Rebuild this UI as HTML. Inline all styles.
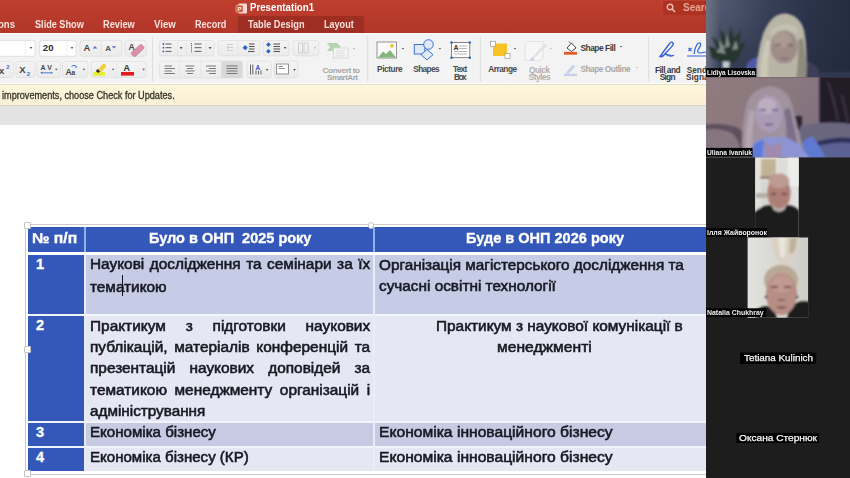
<!DOCTYPE html><html><head><meta charset="utf-8"><style>
html,body{margin:0;padding:0;}
body{width:850px;height:478px;overflow:hidden;position:relative;background:#fff;font-family:"Liberation Sans",sans-serif;}
.t{position:absolute;white-space:pre;}
.b{position:absolute;box-sizing:border-box;}
svg{position:absolute;}
</style></head><body>
<div class="b" style="left:0.00px;top:0.00px;width:706.00px;height:32.80px;background:linear-gradient(#bf3f2e,#b7392b 60%,#b3362a);"></div>
<div class="b" style="left:238.00px;top:16.00px;width:125.50px;height:16.80px;background:#9e2e22;border-radius:2px 2px 0 0;"></div>
<div class="t" style="left:-2.00px;top:19.54px;font-size:10px;line-height:10px;color:#f8e2dc;font-weight:bold;transform-origin:0 0;transform:scaleX(0.9551);">ons</div>
<div class="t" style="left:34.80px;top:19.54px;font-size:10px;line-height:10px;color:#f8e2dc;font-weight:bold;transform-origin:0 0;transform:scaleX(0.9137);">Slide Show</div>
<div class="t" style="left:102.80px;top:19.54px;font-size:10px;line-height:10px;color:#f8e2dc;font-weight:bold;transform-origin:0 0;transform:scaleX(0.9217);">Review</div>
<div class="t" style="left:153.60px;top:19.54px;font-size:10px;line-height:10px;color:#f8e2dc;font-weight:bold;transform-origin:0 0;transform:scaleX(0.9602);">View</div>
<div class="t" style="left:194.50px;top:19.54px;font-size:10px;line-height:10px;color:#f8e2dc;font-weight:bold;transform-origin:0 0;transform:scaleX(0.9072);">Record</div>
<div class="t" style="left:248.30px;top:19.54px;font-size:10px;line-height:10px;color:#f8e2dc;font-weight:bold;transform-origin:0 0;transform:scaleX(0.9187);">Table Design</div>
<div class="t" style="left:324.00px;top:19.54px;font-size:10px;line-height:10px;color:#f8e2dc;font-weight:bold;transform-origin:0 0;transform:scaleX(0.9055);">Layout</div>
<div class="t" style="left:249.60px;top:3.34px;font-size:10px;line-height:10px;color:#ffffff;font-weight:bold;transform-origin:0 0;transform:scaleX(0.9682);">Presentation1</div>
<svg style="left:235px;top:2px" width="13" height="13" viewBox="0 0 13 13"><rect x="3.5" y="1.5" width="8.5" height="10" rx="1" fill="#f6d9d2"/><rect x="1" y="3.2" width="7" height="7" rx="0.8" fill="#d24c33" stroke="#f3c9bf" stroke-width="0.6"/><text x="2.6" y="8.9" font-family="Liberation Sans" font-size="6" font-weight="bold" fill="#fff">P</text></svg>
<div class="b" style="left:663.00px;top:1.00px;width:43.00px;height:13.50px;background:#ac3322;border-radius:3px 0 0 3px;"></div>
<svg style="left:666px;top:3px" width="10" height="10" viewBox="0 0 10 10"><circle cx="4" cy="4" r="2.8" fill="none" stroke="#eebbb2" stroke-width="1.4"/><line x1="6" y1="6" x2="9" y2="9" stroke="#eebbb2" stroke-width="1.6"/></svg>
<div class="t" style="left:683.00px;top:2.94px;font-size:10px;line-height:10px;color:#e4a292;font-weight:bold;">Search</div>
<div class="b" style="left:0.00px;top:32.80px;width:706.00px;height:50.70px;background:linear-gradient(#fbfbfb 0px,#f3f3f3 2px,#f3f3f3);"></div>
<svg style="left:0px;top:33.5px" width="706" height="50" viewBox="0 33.5 706 50" font-family="Liberation Sans, sans-serif">
<defs>
<linearGradient id="gb" x1="0" y1="0" x2="0" y2="1"><stop offset="0" stop-color="#f4f4f4"/><stop offset="1" stop-color="#ebebeb"/></linearGradient>
</defs>
<g fill="url(#gb)" stroke="#dcdcdc" stroke-width="0.7">
<rect x="80" y="39.9" width="41.9" height="15.9" rx="2.5"/>
<rect x="125" y="39.9" width="21.2" height="15.9" rx="2.5"/>
<rect x="-3" y="61" width="16.5" height="16" rx="2.5"/>
<rect x="15.9" y="61" width="19.1" height="16" rx="2.5"/>
<rect x="37" y="61" width="23.4" height="16" rx="2.5"/>
<rect x="62.5" y="61" width="25.4" height="16" rx="2.5"/>
<rect x="91.2" y="61" width="55" height="16" rx="2.5"/>
<rect x="159.4" y="40" width="54.6" height="15.4" rx="2.5"/>
<rect x="218" y="40" width="42" height="15.4" rx="2.5"/>
<rect x="263" y="40" width="26" height="15.4" rx="2.5"/>
<rect x="292.8" y="40" width="26" height="15.4" rx="2.5"/>
<rect x="159.4" y="60.6" width="83" height="17" rx="2.5"/>
<rect x="247" y="60.6" width="24.4" height="16.8" rx="2.5"/>
<rect x="274.4" y="60.6" width="23.6" height="16.8" rx="2.5"/>
</g>
<!-- dividers inside groups -->
<g stroke="#e2e2e2" stroke-width="0.7">
<line x1="101" y1="40.5" x2="101" y2="55.3"/>
<line x1="116.6" y1="61.5" x2="116.6" y2="76.5"/>
<line x1="177.8" y1="40.5" x2="177.8" y2="55"/>
<line x1="186.3" y1="40.5" x2="186.3" y2="55"/>
<line x1="206" y1="40.5" x2="206" y2="55"/>
<line x1="238" y1="40.5" x2="238" y2="55"/>
<line x1="179.4" y1="61" x2="179.4" y2="77"/>
<line x1="200.6" y1="61" x2="200.6" y2="77"/>
</g>
<rect x="221.2" y="60.8" width="21.2" height="16.6" fill="#d9d9d9"/>
<!-- separators -->
<g stroke="#d8d8d8" stroke-width="0.8">
<line x1="152.5" y1="36" x2="152.5" y2="81"/>
<line x1="367.7" y1="36" x2="367.7" y2="81"/>
<line x1="480.4" y1="36" x2="480.4" y2="81"/>
<line x1="648.6" y1="36" x2="648.6" y2="81"/>
</g>
<!-- font name & size boxes -->
<rect x="-3" y="39.9" width="38" height="15.9" rx="2" fill="#ffffff" stroke="#d6d6d6" stroke-width="0.7"/>
<line x1="25.4" y1="40.5" x2="25.4" y2="55.3" stroke="#ececec" stroke-width="0.7"/>
<rect x="39.7" y="39.9" width="36.5" height="15.9" rx="2" fill="#ffffff" stroke="#d6d6d6" stroke-width="0.7"/>
<line x1="66.7" y1="40.5" x2="66.7" y2="55.3" stroke="#ececec" stroke-width="0.7"/>
<text x="42.8" y="50.3" font-size="9.6" font-weight="bold" fill="#2a2a2a">20</text>
<g fill="#555">
<path d="M29.6,46.6 h2.8 l-1.4,2 z"/>
<path d="M70.6,46.6 h2.8 l-1.4,2 z"/>
<path d="M179.6,46.6 h3 l-1.5,2.1 z"/>
<path d="M208.6,46.6 h3 l-1.5,2.1 z"/>
<path d="M283.6,46.4 h3 l-1.5,2.1 z"/>
<path d="M55,68.2 h2.6 l-1.3,1.9 z"/>
<path d="M82.6,68.2 h2.6 l-1.3,1.9 z"/>
<path d="M111.8,68.2 h2.6 l-1.3,1.9 z"/>
<path d="M142.4,68.2 h2.6 l-1.3,1.9 z"/>
<path d="M265.8,68.6 h2.6 l-1.3,1.9 z"/>
<path d="M293.2,68.6 h2.6 l-1.3,1.9 z"/>
<path d="M401.7,47.4 h2.4 l-1.2,1.7 z"/>
<path d="M438.7,47.4 h2.4 l-1.2,1.7 z"/>
<path d="M513.7,47.4 h2.4 l-1.2,1.7 z"/>
<path d="M619.7,45.4 h2.4 l-1.2,1.7 z"/>
</g>
<g fill="#bdbdbd">
<path d="M313.6,46.4 h2.6 l-1.3,1.9 z"/>
<path d="M352.6,47.4 h2.6 l-1.3,1.9 z"/>
<path d="M549.6,47.4 h2.4 l-1.2,1.7 z"/>
<path d="M635.6,66.4 h2.4 l-1.2,1.7 z"/>
</g>
<!-- grow / shrink font -->
<text x="83.6" y="50.8" font-size="9.4" font-weight="bold" fill="#474747">A</text>
<path d="M92.6,48 l2.4,-2.4 l2.4,2.4 z" fill="#5a6ec8"/>
<text x="105.2" y="50.6" font-size="8" font-weight="bold" fill="#555">A</text>
<path d="M111.8,45.8 h4.4 l-2.2,2.3 z" fill="#5a6ec8"/>
<!-- clear formatting -->
<text x="128.4" y="49.6" font-size="8.6" font-weight="bold" fill="#474747">A</text>
<path d="M131.6,51.8 l8.2,-7.2 q1.2,-1 2.2,0 l1.6,1.6 q1,1.1 0,2.1 l-8,7.4 q-1,0.9 -2,0 l-2,-1.9 q-0.9,-1 0,-2 z" fill="#dc8eac" stroke="#b4607e" stroke-width="0.5"/>
<!-- x^2 x_2 -->
<text x="-1" y="73.6" font-size="9.5" font-weight="bold" fill="#444">x</text>
<text x="6.3" y="68.4" font-size="6" font-weight="bold" fill="#3b6fd1">2</text>
<text x="19.2" y="72.6" font-size="9.5" font-weight="bold" fill="#444">X</text>
<text x="26.7" y="75.2" font-size="6" font-weight="bold" fill="#3b6fd1">2</text>
<!-- char spacing -->
<text x="40.6" y="69" font-size="7" font-weight="bold" fill="#474747" textLength="11.4">AV</text>
<path d="M41.5,72.3 h10" stroke="#3b6fd1" stroke-width="0.9"/>
<path d="M40.4,72.3 l1.8,-1.3 v2.6 z M53,72.3 l-1.8,-1.3 v2.6 z" fill="#3b6fd1"/>
<!-- change case -->
<text x="65.6" y="74.2" font-size="8.6" font-weight="bold" fill="#474747">A</text>
<text x="71.4" y="74.2" font-size="6.6" font-weight="bold" fill="#474747">a</text>
<path d="M71.5,65.8 q2.6,-2.2 5,0.2" stroke="#3b6fd1" stroke-width="1" fill="none"/>
<path d="M76.8,67.4 l-2,-0.6 l1.6,-1.4 z" fill="#3b6fd1"/>
<!-- highlighter -->
<rect x="93" y="71.5" width="12" height="3.8" rx="0.8" fill="#e6f02a"/>
<path d="M97.5,69.6 l5.5,-6 q1,-0.8 1.8,0 l1.2,1.2 q0.7,0.8 0,1.6 l-5.6,5.8 z" fill="#f2cf3c"/>
<path d="M95.8,70.6 l1.8,-2.1 l2.6,2.4 l-2.2,1.6 z" fill="#2e2e2e"/>
<!-- font color -->
<text x="123.6" y="70.2" font-size="9" font-weight="bold" fill="#333">A</text>
<rect x="121" y="71.5" width="13" height="3.6" fill="#e01b1b"/>
<!-- bullets -->
<g fill="#3a5bb0"><circle cx="163.4" cy="43.5" r="0.9"/><circle cx="163.4" cy="47.2" r="0.9"/><circle cx="163.4" cy="50.9" r="0.9"/></g>
<g stroke="#4d4d4d" stroke-width="0.9"><line x1="165.5" y1="43.5" x2="171.5" y2="43.5"/><line x1="165.5" y1="47.2" x2="171.5" y2="47.2"/><line x1="165.5" y1="50.9" x2="171.5" y2="50.9"/>
<line x1="194.5" y1="43.5" x2="201.5" y2="43.5"/><line x1="194.5" y1="47.2" x2="201.5" y2="47.2"/><line x1="194.5" y1="50.9" x2="201.5" y2="50.9"/></g>
<line x1="191.5" y1="42.5" x2="191.5" y2="52" stroke="#5a6fb8" stroke-width="1" stroke-dasharray="1.2,0.6"/>
<!-- indents -->
<g stroke="#c9c9c9" stroke-width="0.9"><line x1="227" y1="44" x2="233" y2="44"/><line x1="229" y1="47" x2="233" y2="47"/><line x1="227" y1="50" x2="233" y2="50"/></g>
<path d="M226.5,47 l2,-2 v4 z" fill="#b8c3e6"/>
<g stroke="#5a5a5a" stroke-width="1.1"><line x1="249" y1="43.5" x2="254.5" y2="43.5"/><line x1="249" y1="46" x2="254.5" y2="46"/><line x1="249" y1="48.5" x2="254.5" y2="48.5"/><line x1="248" y1="51" x2="254.5" y2="51"/></g>
<path d="M245.2,44.6 l2.6,2.6 l-2.6,2.6 l-2.6,-2.6 z" fill="#2a5fcc"/>
<!-- line spacing -->
<path d="M268.4,41.8 l2.3,2.3 l-2.3,2.3 l-2.3,-2.3 z M268.4,48.4 l2.3,2.3 l-2.3,2.3 l-2.3,-2.3 z" fill="#2a5fcc"/>
<g stroke="#5a5a5a" stroke-width="1.1"><line x1="273.5" y1="43.5" x2="280" y2="43.5"/><line x1="273.5" y1="46" x2="280" y2="46"/><line x1="273.5" y1="48.5" x2="280" y2="48.5"/><line x1="273.5" y1="51" x2="280" y2="51"/></g>
<!-- columns disabled -->
<g stroke="#cfcfcf" stroke-width="1"><rect x="298.5" y="42.5" width="4" height="10" fill="none"/><rect x="304" y="42.5" width="4" height="10" fill="none"/></g>
<!-- align icons -->
<g stroke="#6b6b6b" stroke-width="0.9">
<line x1="164.5" y1="65.5" x2="172" y2="65.5"/><line x1="164.5" y1="68" x2="175" y2="68"/><line x1="164.5" y1="70.5" x2="172" y2="70.5"/><line x1="164.5" y1="73" x2="175" y2="73"/>
<line x1="185.5" y1="65.5" x2="194.5" y2="65.5"/><line x1="187" y1="68" x2="193" y2="68"/><line x1="185.5" y1="70.5" x2="194.5" y2="70.5"/><line x1="187" y1="73" x2="193" y2="73"/>
<line x1="206" y1="65.5" x2="216" y2="65.5"/><line x1="209" y1="68" x2="216" y2="68"/><line x1="206" y1="70.5" x2="216" y2="70.5"/><line x1="209" y1="73" x2="216" y2="73"/>
<line x1="226.5" y1="65.5" x2="237.5" y2="65.5"/><line x1="226.5" y1="68" x2="237.5" y2="68"/><line x1="226.5" y1="70.5" x2="237.5" y2="70.5"/><line x1="226.5" y1="73" x2="237.5" y2="73"/>
</g>
<!-- text direction -->
<g stroke="#555" stroke-width="0.9"><line x1="250.5" y1="64" x2="250.5" y2="74"/><line x1="252.8" y1="64" x2="252.8" y2="74"/><line x1="256" y1="70" x2="256" y2="74"/><line x1="258.5" y1="70" x2="258.5" y2="74"/><line x1="261" y1="70" x2="261" y2="74"/></g>
<text x="255.5" y="69.5" font-size="6.5" font-weight="bold" fill="#2e62c9">A</text>
<!-- align text -->
<rect x="276.5" y="63.5" width="12" height="10" fill="#fff" stroke="#777" stroke-width="0.8"/>
<g stroke="#777" stroke-width="0.8"><line x1="278.5" y1="66" x2="283" y2="66"/><line x1="278.5" y1="68" x2="285" y2="68"/></g>
<!-- SmartArt -->
<path d="M327,42.5 h10 l4,4 l-4,4 h-10 l3,-4 z" fill="#b6d3b0"/>
<rect x="333.5" y="47.5" width="14.5" height="10" fill="#f4f4f4" stroke="#cfd8cf" stroke-width="0.8"/>
<g stroke="#d5dcd5" stroke-width="0.8"><line x1="336" y1="50.5" x2="345" y2="50.5"/><line x1="336" y1="53" x2="345" y2="53"/><line x1="336" y1="55.3" x2="345" y2="55.3"/></g>
<text x="322.6" y="72.1" font-size="8.1" font-weight="bold" fill="#a6a6a6" textLength="37.4">Convert to</text>
<text x="327" y="79.6" font-size="8.1" font-weight="bold" fill="#a6a6a6" textLength="31">SmartArt</text>
<!-- Picture -->
<rect x="377" y="41.5" width="19.5" height="16" fill="#fafafa" stroke="#8a8a8a" stroke-width="0.9"/>
<path d="M378,57 l5,-6 l3,2.5 l4,-4 l6,7.5 z" fill="#84b77e"/>
<circle cx="392" cy="45.3" r="1.9" fill="#e7c52d"/>
<text x="377" y="71.8" font-size="8.3" font-weight="bold" fill="#4a4a4a" textLength="25.7">Picture</text>
<!-- Shapes -->
<rect x="414.3" y="44" width="10.5" height="9.5" fill="#dfe9f8" stroke="#3f73cf" stroke-width="1"/>
<circle cx="428.5" cy="44" r="4.8" fill="#dfe9f8" stroke="#3f73cf" stroke-width="1"/>
<path d="M427,49 l6,5.2 l-6,5.2 l-6,-5.2 z" fill="#dfe9f8" stroke="#3f73cf" stroke-width="1"/>
<text x="413.3" y="71.8" font-size="8.3" font-weight="bold" fill="#4a4a4a" textLength="26.3">Shapes</text>
<!-- Text Box -->
<rect x="451.5" y="42" width="18.3" height="15.2" fill="#fff" stroke="#555" stroke-width="0.7"/>
<g fill="#2a5bc4"><circle cx="451.5" cy="42" r="1.2"/><circle cx="469.8" cy="42" r="1.2"/><circle cx="451.5" cy="57.2" r="1.2"/><circle cx="469.8" cy="57.2" r="1.2"/></g>
<text x="453.5" y="49.5" font-size="7" font-weight="bold" fill="#333">A</text>
<g stroke="#999" stroke-width="0.7"><line x1="459" y1="45.5" x2="467" y2="45.5"/><line x1="459" y1="48" x2="467" y2="48"/><line x1="454" y1="51" x2="467" y2="51"/><line x1="454" y1="53.5" x2="467" y2="53.5"/></g>
<text x="452.9" y="71.8" font-size="8.3" font-weight="bold" fill="#4a4a4a" textLength="14.4">Text</text>
<text x="454" y="79.6" font-size="8.3" font-weight="bold" fill="#4a4a4a" textLength="12.7">Box</text>
<!-- Arrange -->
<rect x="493" y="43" width="14" height="12.5" fill="#f7c324"/>
<rect x="490.5" y="40.8" width="5" height="5" fill="#fff" stroke="#999" stroke-width="0.7"/>
<rect x="505" y="53" width="5" height="5" fill="#fff" stroke="#999" stroke-width="0.7"/>
<text x="488.3" y="71.8" font-size="8.3" font-weight="bold" fill="#4a4a4a" textLength="28.8">Arrange</text>
<!-- Quick styles -->
<path d="M525,44 l3,-3 h15 v16 l-3,3 h-15 z" fill="#f6f6f6" stroke="#dddddd" stroke-width="0.8"/>
<path d="M532,57 l13,-14 l2,2 l-13,13 z" fill="#e2e2e2"/>
<path d="M529.5,59.5 l3,-3 l2,2 l-3,2 z" fill="#c6cdf0"/>
<text x="529" y="72" font-size="8.3" font-weight="bold" fill="#b0b0b0" textLength="21">Quick</text>
<text x="528.6" y="79.6" font-size="8.3" font-weight="bold" fill="#b0b0b0" textLength="22">Styles</text>
<!-- Shape Fill -->
<path d="M567,47.5 l4.5,-5 l4.5,5 l-4.5,3.5 z" fill="#fff" stroke="#333" stroke-width="0.9"/>
<path d="M569,41 l2,2" stroke="#333" stroke-width="0.9"/>
<rect x="564" y="51.4" width="13" height="2.8" fill="#e35d22"/>
<text x="580.4" y="50.9" font-size="8.3" font-weight="bold" fill="#3a3a3a" textLength="35.3">Shape Fill</text>
<!-- Shape Outline -->
<path d="M566,72 l7,-8 l2,2 l-7,8 z" fill="#c8d0ec"/>
<rect x="564" y="73.2" width="13" height="2.4" fill="#c8d0ec"/>
<text x="580.4" y="71.7" font-size="8.3" font-weight="bold" fill="#a8a8a8" textLength="50.3">Shape Outline</text>
<!-- Fill and Sign -->
<path d="M660,56 l9.5,-13 q2.2,-2.5 3.5,-0.6 q1,1.6 -1.5,4 l-9,9.6 z M662,55.5 q3,-2 5,-1.5 q1,0.8 0,1.5 q2,-1.5 3,-1 q1,0.8 -0.5,1.4 l4.5,-1" fill="none" stroke="#2f62d4" stroke-width="1.3"/>
<text x="654.9" y="72.1" font-size="8.3" font-weight="bold" fill="#3a3a3a" textLength="25.7">Fill and</text>
<text x="659.8" y="79.6" font-size="8.3" font-weight="bold" fill="#3a3a3a" textLength="15.7">Sign</text>
<!-- Send for signatures -->
<path d="M688.5,50.5 l3,-3 m-3,0 l3,3" stroke="#2f62d4" stroke-width="1.1"/>
<path d="M694,53.5 q2,-12 6,-11 q2,1 -2,7 q-1,3 2,3 l6,-1" fill="none" stroke="#2f62d4" stroke-width="1.2"/>
<line x1="687" y1="55.5" x2="706" y2="55.5" stroke="#2f62d4" stroke-width="1"/>
<text x="686.7" y="72.1" font-size="8.3" font-weight="bold" fill="#3a3a3a">Send</text>
<text x="686" y="79.6" font-size="8.3" font-weight="bold" fill="#3a3a3a">Signa</text>
</svg>

<div class="b" style="left:0.00px;top:83.50px;width:706.00px;height:22.80px;background:linear-gradient(#fcf6da,#f9f1d6);border-top:1px solid #e4dec6;border-bottom:1.3px solid #d8d2bd;"></div>
<div class="t" style="left:2.00px;top:90.94px;font-size:10px;line-height:10px;color:#33322a;font-weight:normal;transform-origin:0 0;transform:scaleX(0.9138);-webkit-text-stroke:0.3px #33322a;">improvements, choose Check for Updates.</div>
<div class="b" style="left:0.00px;top:106.30px;width:706.00px;height:18.40px;background:#e4e3e4;"></div>
<div class="b" style="left:25.40px;top:224.00px;width:680.60px;height:251.20px;border:1.3px solid #cbcbcb;border-right:none;"></div>
<div class="b" style="left:28.40px;top:227.40px;width:687.60px;height:25.00px;background:#3458b9;"></div>
<div class="b" style="left:28.40px;top:252.40px;width:56.10px;height:218.60px;background:#3458b9;"></div>
<div class="b" style="left:84.50px;top:252.40px;width:631.50px;height:62.00px;background:#c6cce5;"></div>
<div class="b" style="left:84.50px;top:314.40px;width:631.50px;height:107.30px;background:#e5e7f2;"></div>
<div class="b" style="left:84.50px;top:421.70px;width:631.50px;height:25.10px;background:#c6cbe3;"></div>
<div class="b" style="left:84.50px;top:446.80px;width:631.50px;height:24.20px;background:#e5e7f2;"></div>
<div class="b" style="left:28.40px;top:252.40px;width:687.60px;height:3.00px;background:#ffffff;"></div>
<div class="b" style="left:28.40px;top:314.00px;width:687.60px;height:2.00px;background:#f2f4fb;"></div>
<div class="b" style="left:28.40px;top:421.30px;width:687.60px;height:2.00px;background:#f2f4fb;"></div>
<div class="b" style="left:28.40px;top:446.40px;width:687.60px;height:2.00px;background:#f2f4fb;"></div>
<div class="b" style="left:83.50px;top:227.40px;width:2.10px;height:25.00px;background:#8fb0ea;"></div>
<div class="b" style="left:83.50px;top:255.40px;width:2.10px;height:215.60px;background:#e9edf8;"></div>
<div class="b" style="left:373.40px;top:227.40px;width:2.10px;height:25.00px;background:#8fb0ea;"></div>
<div class="b" style="left:373.40px;top:255.40px;width:2.10px;height:215.60px;background:#e9edf8;"></div>
<div class="b" style="left:122.30px;top:275.20px;width:1.10px;height:20.50px;background:#111;"></div>
<div class="b" style="left:24.00px;top:222.20px;width:6.50px;height:6.40px;background:#fff;border:1.2px solid #c4c4c4;border-radius:1px;"></div>
<div class="b" style="left:367.80px;top:222.30px;width:6.50px;height:6.40px;background:#fff;border:1.2px solid #c4c4c4;border-radius:3px;"></div>
<div class="b" style="left:24.00px;top:346.20px;width:6.50px;height:6.40px;background:#fff;border:1.2px solid #c4c4c4;border-radius:1px;"></div>
<div class="b" style="left:24.10px;top:470.40px;width:6.50px;height:6.40px;background:#fff;border:1.2px solid #c4c4c4;border-radius:1px;"></div>
<svg style="left:706px;top:0px" width="144" height="478" viewBox="706 0 144 478">
<defs>
<filter id="bl1" x="-30%" y="-30%" width="160%" height="160%"><feGaussianBlur stdDeviation="1.3"/></filter>
<filter id="bl2" x="-30%" y="-30%" width="160%" height="160%"><feGaussianBlur stdDeviation="2.2"/></filter>
<clipPath id="c1"><rect x="706" y="0" width="144" height="77.3"/></clipPath>
<clipPath id="c2"><rect x="706" y="77.3" width="144" height="80"/></clipPath>
<clipPath id="c3"><rect x="755.1" y="157.5" width="43.6" height="79.5"/></clipPath>
<clipPath id="c4"><rect x="747.6" y="237.5" width="60.5" height="80.3"/></clipPath>
<radialGradient id="nv" cx="706" cy="0" r="160" gradientUnits="userSpaceOnUse"><stop offset="0" stop-color="#586074"/><stop offset="0.2" stop-color="#465066"/><stop offset="0.4" stop-color="#363f56"/><stop offset="0.65" stop-color="#2a3349"/><stop offset="1" stop-color="#222a3d"/></radialGradient>
<linearGradient id="wall2" x1="0" y1="0" x2="1" y2="0.3"><stop offset="0" stop-color="#8f7b7f"/><stop offset="0.6" stop-color="#8a787e"/><stop offset="1" stop-color="#7c6e80"/></linearGradient>
<linearGradient id="bg4" x1="0" y1="0" x2="1" y2="0"><stop offset="0" stop-color="#e2e2de"/><stop offset="1" stop-color="#cfcdc7"/></linearGradient>
<linearGradient id="bg3" x1="0" y1="0" x2="1" y2="0"><stop offset="0" stop-color="#d2d2cf"/><stop offset="1" stop-color="#e2e2e0"/></linearGradient>
<linearGradient id="edge1" x1="0" y1="0" x2="1" y2="0"><stop offset="0" stop-color="#6c7282" stop-opacity="1"/><stop offset="0.4" stop-color="#6c7282" stop-opacity="0.6"/><stop offset="1" stop-color="#6c7282" stop-opacity="0"/></linearGradient>
</defs>
<rect x="706" y="0" width="144" height="478" fill="#1d1d1d"/>
<!-- tile 1: Lidiya -->
<g clip-path="url(#c1)">
<rect x="706" y="0" width="144" height="78" fill="url(#nv)"/>
<rect x="706" y="0" width="14" height="78" fill="url(#edge1)"/>
<g filter="url(#bl1)">
<rect x="812" y="72" width="42" height="8" fill="#2e3850"/>
<!-- plant -->
<path d="M726,63 L712,58 L709,46 L718,50 L712,37 L722,44 L720,29 L728,40 L731,26 L734,39 L741,30 L739,45 L746,41 L740,55 L734,63 Z" fill="#28342f"/>
<path d="M716,52 L722,46 L726,54 Z M727,34 L730,46 L725,48 Z M736,40 L732,50 L738,49 Z M719,40 L725,48 L720,50 Z" fill="#7e9088"/>
<rect x="722.5" y="61.5" width="7" height="6.5" fill="#c4c8ce"/>
<!-- clothes -->
<path d="M742,80 L748,62 Q756,55 766,56 L770,80 Z" fill="#4e58a8"/>
<path d="M768,80 L771,64 Q785,60 800,64 L804,80 Z" fill="#30325a"/>
<path d="M800,80 L801,62 Q810,60 818,68 L820,80 Z" fill="#3c3d58"/>
<!-- hair -->
<path d="M756,80 Q757,52 763,34 Q771,14 784,13.5 Q799,14 804,30 Q808,50 806,80 Z" fill="#b9b5a6"/>
<path d="M760,80 Q761,55 766,40 L771,42 Q767,60 768,80 Z" fill="#ccc8b8"/>
<path d="M796,80 Q799,58 798,40 L803,38 Q807,58 806,80 Z" fill="#8e8a7c"/>
<!-- face -->
<ellipse cx="784" cy="47" rx="13.5" ry="16.5" fill="#9e8c86"/>
<ellipse cx="782" cy="40" rx="9" ry="8" fill="#ab9a92"/>
<path d="M771,36 Q784,25 798,34 L797,28 Q786,19 770,30 Z" fill="#c4c0b0"/>
<path d="M775,45 h6 M787,45 h6" stroke="#6e6260" stroke-width="1.6"/>
<path d="M781,58 q3.5,1.5 7,0" stroke="#7a6a68" stroke-width="1.4" fill="none"/>
</g>
</g>
<!-- tile 2: Uliana -->
<g clip-path="url(#c2)">
<rect x="706" y="77" width="144" height="81" fill="url(#wall2)"/>
<g filter="url(#bl1)">
<rect x="819.5" y="74" width="34" height="54" fill="#221c27"/>
<path d="M828,82 Q834,100 838,120 M842,95 Q845,108 848,122" stroke="#3a3240" stroke-width="2.5" fill="none"/>
<rect x="792" y="116" width="10" height="14" fill="#2a2630"/>
<!-- sofa -->
<path d="M703,125 Q722,122 738,128 Q748,134 750,160 L703,160 Z" fill="#5e505e"/>
<path d="M703,130 Q718,127 732,133 Q741,141 742,160 L703,160 Z" fill="#85767f"/>
<path d="M800,126 Q826,120 853,124 L853,160 L800,160 Z" fill="#6a6680"/>
<path d="M816,142 Q834,136 853,138 L853,160 L816,160 Z" fill="#2e2e5c"/>
<path d="M818,146 Q836,141 853,143 L853,160 L818,160 Z" fill="#5c6294"/>
<path d="M794,160 Q798,142 812,136 Q822,148 826,160 Z" fill="#5e78d0"/>
<!-- hair -->
<path d="M742,160 Q741,120 748,100 Q756,87 770,86 Q786,87 792,104 Q798,130 806,160 Z" fill="#a0929e"/>
<path d="M745,160 Q745,128 750,110 L755,112 Q751,136 752,160 Z" fill="#b4a6b0"/>
<path d="M786,160 Q788,128 784,110 L790,108 Q796,136 800,160 Z" fill="#7c6e8a"/>
<!-- top -->
<path d="M750,160 L754,142 Q768,134 788,138 Q802,144 810,160 Z" fill="#8c94d4"/>
<path d="M750,160 L753,146 Q758,140 764,140 L762,160 Z" fill="#5d7ad8"/>
<path d="M764,139 Q772,152 782,140 L781,160 L766,160 Z" fill="#a08aae"/>
<!-- face -->
<ellipse cx="769" cy="114" rx="13.5" ry="18.5" fill="#ab9cb6"/>
<ellipse cx="767" cy="106" rx="9" ry="8" fill="#bcaec0"/>
<path d="M760,110 h6 M772,110 h6" stroke="#5c5280" stroke-width="1.5"/>
<path d="M765,124 q4,1.5 8,0" stroke="#6a4c78" stroke-width="1.5" fill="none"/>
</g>
</g>
<!-- tile 3: Illia -->
<g clip-path="url(#c3)">
<rect x="755" y="157" width="44" height="81" fill="url(#bg3)"/>
<g filter="url(#bl1)">
<rect x="788" y="156" width="14" height="30" fill="#ececea"/>
<rect x="755" y="156" width="6" height="60" fill="#e2e0dc"/>
<rect x="758" y="157" width="20" height="24" fill="#e6e4de"/>
<rect x="761" y="159" width="15" height="18" fill="#c2b296"/>
<rect x="760" y="176.5" width="17" height="2.5" fill="#8a7a62"/>
<rect x="756" y="193" width="14" height="5" fill="#b4b0aa"/>
<!-- sweater -->
<path d="M752,240 L753,213 Q762,205 772,205 L786,205 Q796,205 801,213 L801,240 Z" fill="#1a1a1a"/>
<!-- head -->
<ellipse cx="779" cy="193" rx="11.5" ry="17.5" fill="#ad7e76"/>
<ellipse cx="779" cy="181" rx="10.5" ry="7.5" fill="#bd9a92"/>
<path d="M771,194 h5 M782,194 h5" stroke="#6a4844" stroke-width="1.8"/>
<path d="M772,204 Q779,213 786,204 L785,209 Q779,215 773,209 Z" fill="#b8b0ae"/>
</g>
</g>
<!-- tile 4: Natalia -->
<g clip-path="url(#c4)">
<rect x="747" y="237" width="62" height="81" fill="url(#bg4)"/>
<g filter="url(#bl1)">
<path d="M771,236 L799,236 L797,248 Q792,262 784,265 Q776,262 773,250 Z" fill="#d9d2c2"/>
<path d="M778,236 L786,236 L785,256 Q782,259 780,255 Z" fill="#e8e5dc"/>
<path d="M790,238 L797,238 L795,250 Q792,256 789,252 Z" fill="#bdb199"/>
<!-- clothes -->
<path d="M756,320 L758,309 Q766,303 775,309 L777,320 Z" fill="#1c1c1c"/>
<path d="M787,320 L789,307 Q800,299 810,302 L810,320 Z" fill="#1e1e1e"/>
<!-- hair -->
<ellipse cx="781" cy="280" rx="17" ry="15" fill="#b9a994"/>
<!-- face -->
<ellipse cx="781.5" cy="294" rx="15.5" ry="21" fill="#b68e86"/><ellipse cx="781.5" cy="284" rx="11" ry="9" fill="#c09a92"/>
<path d="M771,287 h7 M784,287 h7" stroke="#6e4e4a" stroke-width="1.8"/><path d="M778,299 q3.5,3 7,0" stroke="#7a5048" stroke-width="1.4" fill="none"/>
<path d="M777,307 q4.5,1.5 9,0" stroke="#7a3a3a" stroke-width="1.8" fill="none"/>
<circle cx="766" cy="297" r="1.3" fill="#4a3a34"/><circle cx="797" cy="297" r="1.3" fill="#4a3a34"/>
</g>
</g>
<!-- labels -->
<rect x="706" y="68.2" width="50.3" height="8.8" fill="#000"/>
<rect x="706" y="147.9" width="46.6" height="8.8" fill="#000"/>
<rect x="706" y="228.3" width="61.4" height="8.4" fill="#000"/>
<rect x="706" y="308.3" width="60" height="8.7" fill="#000"/>
<rect x="740" y="352.5" width="76.2" height="11.4" fill="#000"/>
<rect x="736.3" y="432.9" width="82.9" height="10.1" fill="#000"/>
</svg>

<div class="t" style="left:32.10px;top:231.25px;font-size:14px;line-height:14px;color:#ffffff;font-weight:bold;-webkit-text-stroke:0.35px #ffffff;transform-origin:0 0;transform:scaleX(1.1212);">№ п/п</div>
<div class="t" style="left:148.80px;top:231.25px;font-size:14px;line-height:14px;color:#ffffff;font-weight:bold;-webkit-text-stroke:0.35px #ffffff;transform-origin:0 0;transform:scaleX(1.0350);">Було в ОНП  2025 року</div>
<div class="t" style="left:466.00px;top:231.25px;font-size:14px;line-height:14px;color:#ffffff;font-weight:bold;-webkit-text-stroke:0.35px #ffffff;transform-origin:0 0;transform:scaleX(1.0377);">Буде в ОНП 2026 року</div>
<div class="t" style="left:36.00px;top:257.33px;font-size:14.5px;line-height:14.5px;color:#ffffff;font-weight:bold;-webkit-text-stroke:0.35px #ffffff;">1</div>
<div class="t" style="left:36.00px;top:317.73px;font-size:14.5px;line-height:14.5px;color:#ffffff;font-weight:bold;-webkit-text-stroke:0.35px #ffffff;">2</div>
<div class="t" style="left:36.00px;top:424.73px;font-size:14.5px;line-height:14.5px;color:#ffffff;font-weight:bold;-webkit-text-stroke:0.35px #ffffff;">3</div>
<div class="t" style="left:36.00px;top:449.63px;font-size:14.5px;line-height:14.5px;color:#ffffff;font-weight:bold;-webkit-text-stroke:0.35px #ffffff;">4</div>
<div class="t" style="left:90.00px;top:257.05px;font-size:14px;line-height:14px;color:#171923;font-weight:normal;-webkit-text-stroke:0.55px #171923;width:254.73px;text-align:justify;text-align-last:justify;transform-origin:0 0;transform:scaleX(1.1);">Наукові дослідження та семінари за їх</div>
<div class="t" style="left:90.00px;top:280.05px;font-size:14px;line-height:14px;color:#171923;font-weight:normal;-webkit-text-stroke:0.55px #171923;transform-origin:0 0;transform:scaleX(1.0950);">тематикою</div>
<div class="t" style="left:379.20px;top:258.25px;font-size:14px;line-height:14px;color:#171923;font-weight:normal;-webkit-text-stroke:0.55px #171923;transform-origin:0 0;transform:scaleX(1.0935);">Організація магістерського дослідження та</div>
<div class="t" style="left:379.20px;top:278.95px;font-size:14px;line-height:14px;color:#171923;font-weight:normal;-webkit-text-stroke:0.55px #171923;transform-origin:0 0;transform:scaleX(1.0951);">сучасні освітні технології</div>
<div class="t" style="left:90.00px;top:318.65px;font-size:14px;line-height:14px;color:#171923;font-weight:normal;-webkit-text-stroke:0.55px #171923;width:254.73px;text-align:justify;text-align-last:justify;transform-origin:0 0;transform:scaleX(1.1);">Практикум з підготовки наукових</div>
<div class="t" style="left:90.00px;top:339.95px;font-size:14px;line-height:14px;color:#171923;font-weight:normal;-webkit-text-stroke:0.55px #171923;width:254.73px;text-align:justify;text-align-last:justify;transform-origin:0 0;transform:scaleX(1.1);">публікацій, матеріалів конференцій та</div>
<div class="t" style="left:90.00px;top:361.25px;font-size:14px;line-height:14px;color:#171923;font-weight:normal;-webkit-text-stroke:0.55px #171923;width:254.73px;text-align:justify;text-align-last:justify;transform-origin:0 0;transform:scaleX(1.1);">презентацій наукових доповідей за</div>
<div class="t" style="left:90.00px;top:382.55px;font-size:14px;line-height:14px;color:#171923;font-weight:normal;-webkit-text-stroke:0.55px #171923;width:254.73px;text-align:justify;text-align-last:justify;transform-origin:0 0;transform:scaleX(1.1);">тематикою менеджменту організацій і</div>
<div class="t" style="left:90.00px;top:403.85px;font-size:14px;line-height:14px;color:#171923;font-weight:normal;-webkit-text-stroke:0.55px #171923;transform-origin:0 0;transform:scaleX(1.0910);">адміністрування</div>
<div class="t" style="left:436.00px;top:318.75px;font-size:14px;line-height:14px;color:#171923;font-weight:normal;-webkit-text-stroke:0.55px #171923;transform-origin:0 0;transform:scaleX(1.0986);">Практикум з наукової комунікації в</div>
<div class="t" style="left:497.20px;top:339.95px;font-size:14px;line-height:14px;color:#171923;font-weight:normal;-webkit-text-stroke:0.55px #171923;transform-origin:0 0;transform:scaleX(1.1176);">менеджменті</div>
<div class="t" style="left:90.00px;top:424.75px;font-size:14px;line-height:14px;color:#171923;font-weight:normal;-webkit-text-stroke:0.55px #171923;transform-origin:0 0;transform:scaleX(1.0775);">Економіка бізнесу</div>
<div class="t" style="left:90.00px;top:450.05px;font-size:14px;line-height:14px;color:#171923;font-weight:normal;-webkit-text-stroke:0.55px #171923;transform-origin:0 0;transform:scaleX(1.0756);">Економіка бізнесу (КР)</div>
<div class="t" style="left:379.20px;top:424.75px;font-size:14px;line-height:14px;color:#171923;font-weight:normal;-webkit-text-stroke:0.55px #171923;transform-origin:0 0;transform:scaleX(1.1166);">Економіка інноваційного бізнесу</div>
<div class="t" style="left:379.20px;top:450.05px;font-size:14px;line-height:14px;color:#171923;font-weight:normal;-webkit-text-stroke:0.55px #171923;transform-origin:0 0;transform:scaleX(1.1166);">Економіка інноваційного бізнесу</div>
<div class="t" style="left:707.30px;top:68.53px;font-size:8px;line-height:8px;color:#f2f2f2;font-weight:bold;transform-origin:0 0;transform:scaleX(0.8055);">Lidiya Lisovska</div>
<div class="t" style="left:707.00px;top:148.53px;font-size:8px;line-height:8px;color:#f2f2f2;font-weight:bold;transform-origin:0 0;transform:scaleX(0.8365);">Uliana Ivaniuk</div>
<div class="t" style="left:707.00px;top:228.53px;font-size:8px;line-height:8px;color:#f2f2f2;font-weight:bold;transform-origin:0 0;transform:scaleX(0.8674);">Ілля Жайворонок</div>
<div class="t" style="left:707.00px;top:308.83px;font-size:8px;line-height:8px;color:#f2f2f2;font-weight:bold;transform-origin:0 0;transform:scaleX(0.8675);">Natalia Chukhray</div>
<div class="t" style="left:743.90px;top:353.26px;font-size:9.5px;line-height:9.5px;color:#f2f2f2;font-weight:normal;transform-origin:0 0;transform:scaleX(1.0369);-webkit-text-stroke:0.25px #fff;">Tetiana Kulinich</div>
<div class="t" style="left:738.80px;top:432.96px;font-size:9.5px;line-height:9.5px;color:#f2f2f2;font-weight:normal;transform-origin:0 0;transform:scaleX(1.0676);-webkit-text-stroke:0.25px #fff;">Оксана Стернюк</div>
</body></html>
